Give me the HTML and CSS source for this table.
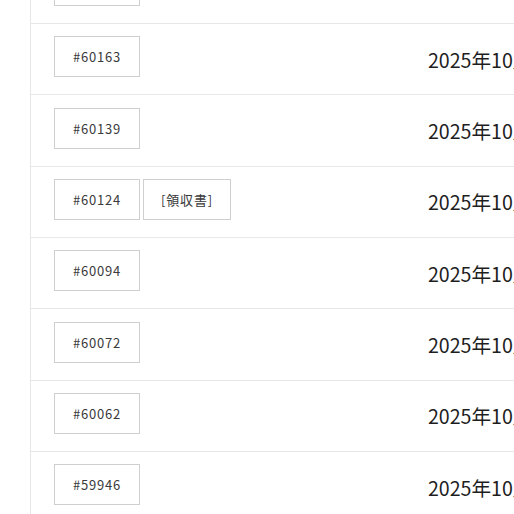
FILE: index.html
```html
<!DOCTYPE html>
<html lang="ja">
<head>
<meta charset="utf-8">
<link rel="stylesheet" href="styles.css">
</head>
<body>
<div class="page">
  <div class="table">
    <div class="row"><div class="cell-id"><span class="btn">#60171</span></div><div class="cell-date">2025年10月20日</div></div>
    <div class="row"><div class="cell-id"><span class="btn">#60163</span></div><div class="cell-date">2025年10月18日</div></div>
    <div class="row"><div class="cell-id"><span class="btn">#60139</span></div><div class="cell-date">2025年10月16日</div></div>
    <div class="row"><div class="cell-id"><span class="btn">#60124</span><span class="btn btn-wide">[領収書]</span></div><div class="cell-date">2025年10月15日</div></div>
    <div class="row"><div class="cell-id"><span class="btn">#60094</span></div><div class="cell-date">2025年10月13日</div></div>
    <div class="row"><div class="cell-id"><span class="btn">#60072</span></div><div class="cell-date">2025年10月11日</div></div>
    <div class="row"><div class="cell-id"><span class="btn">#60062</span></div><div class="cell-date">2025年10月10日</div></div>
    <div class="row"><div class="cell-id"><span class="btn">#59946</span></div><div class="cell-date">2025年10月05日</div></div>
  </div>
</div>
</body>
</html>
```

FILE: styles.css
```css
html, body {
  margin: 0;
  padding: 0;
  background: #fff;
  overflow: hidden;
  width: 514px;
  height: 514px;
}
.page {
  padding-left: 30px;
  font-family: "Noto Sans CJK JP", "Noto Sans", sans-serif;
}
.table {
  margin-top: -47.333px;
  border-left: 1px solid #e6e6e6;
  width: 700px;
}
.row {
  display: flex;
  align-items: center;
  height: 70.333px;
  border-bottom: 1px solid #e8e8e8;
  box-sizing: content-box;
}
.cell-id {
  width: 374px;
  padding-left: 23px;
  display: flex;
  gap: 3px;
  align-self: flex-start;
  padding-top: 12.333px;
}
.btn {
  box-sizing: border-box;
  width: 86px;
  height: 41px;
  border: 1px solid #cfcfcf;
  display: flex;
  align-items: center;
  justify-content: center;
  font-size: 13px;
  letter-spacing: 0.8px;
  color: #3a3a3a;
}
.btn-wide {
  width: 88px;
}
.cell-date {
  font-size: 19.6px;
  color: #1e1e1e;
  white-space: nowrap;
}
```
